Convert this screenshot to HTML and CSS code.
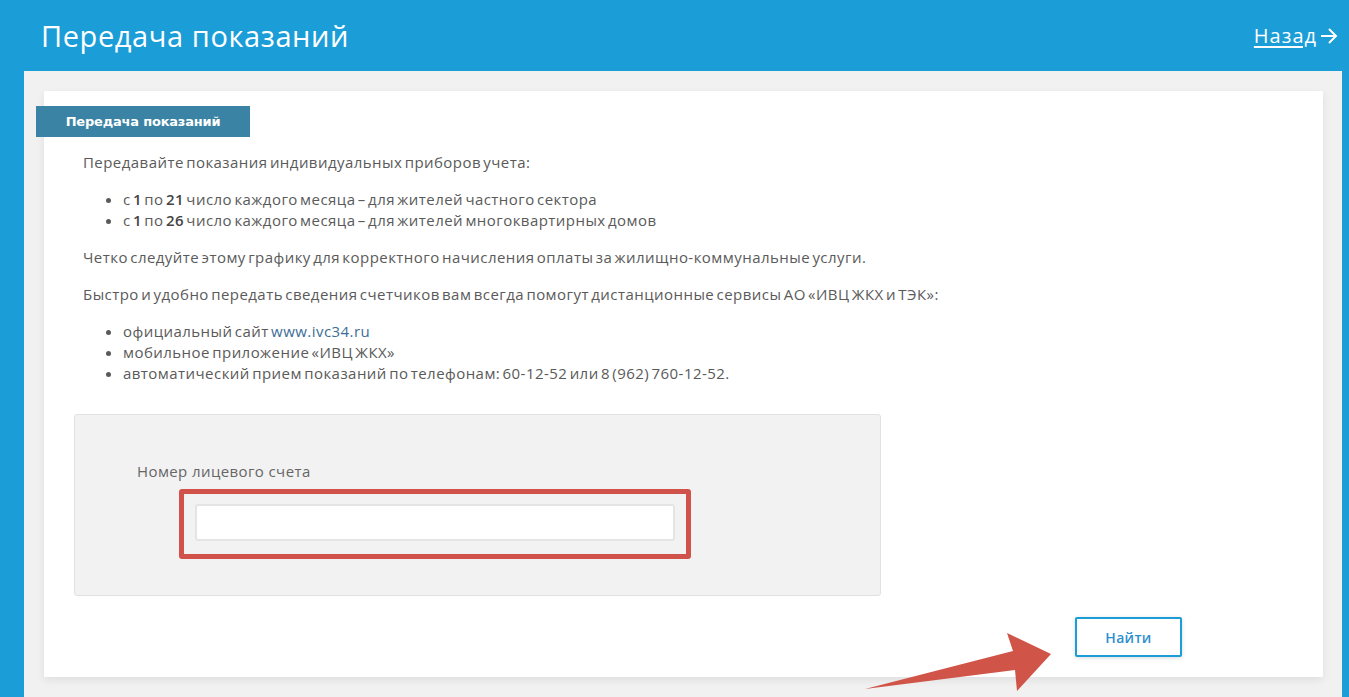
FILE: index.html
```html
<!DOCTYPE html>
<html lang="ru">
<head>
    <meta charset="UTF-8">
    <title>Передача показаний</title>
    <link rel="stylesheet" href="styles.css">
</head>
<body>
    <!-- Top bar -->
    <header class="top-bar">
        <h1 class="page-title">Передача показаний</h1>
        <a class="back-link" href="#">
            <span>Назад</span>
            <svg width="18" height="18" viewBox="0 0 18 18" fill="none" stroke="#fff" stroke-width="2">
                <path d="M1 9h15M9 2l7 7-7 7"/>
            </svg>
        </a>
    </header>

    <div class="panel">
        <div class="card">
            <div class="tab-label">Передача показаний</div>

            <div class="info">
                <p>Передавайте показания индивидуальных приборов учета:</p>
                <ul>
                    <li>с <b>1</b> по <b>21</b> число каждого месяца – для жителей частного сектора</li>
                    <li>с <b>1</b> по <b>26</b> число каждого месяца – для жителей многоквартирных домов</li>
                </ul>
                <p>Четко следуйте этому графику для корректного начисления оплаты за жилищно-коммунальные услуги.</p>
                <p>Быстро и удобно передать сведения счетчиков вам всегда помогут дистанционные сервисы АО «ИВЦ ЖКХ и ТЭК»:</p>
                <ul>
                    <li>официальный сайт <a href="#">www.ivc34.ru</a></li>
                    <li>мобильное приложение «ИВЦ ЖКХ»</li>
                    <li>автоматический прием показаний по телефонам: 60-12-52 или 8 (962) 760-12-52.</li>
                </ul>
            </div>

            <!-- Search form -->
            <div class="form-box">
                <label class="form-label" for="account">Номер лицевого счета</label>
                <div class="highlight">
                    <input type="text" id="account" class="form-input">
                </div>
            </div>

            <div class="actions">
                <button class="find-btn">Найти</button>
            </div>

            <!-- Annotation arrow -->
            <svg class="pointer-arrow" width="200" height="70" viewBox="0 0 200 70">
                <polygon points="0,68 148,30 142,12 186,33 152,70 150,49" fill="#d05447"/>
            </svg>
        </div>
    </div>
</body>
</html>
```

FILE: styles.css
```css
/* General */
body {
    margin: 0;
    font-family: "Open Sans", sans-serif;
    background: #1b9dd8;
    color: #555;
    height: 697px;
    overflow: hidden;
    display: flex;
    flex-direction: column;
}

/* Top bar */
.top-bar {
    height: 71px;
    flex-shrink: 0;
    display: flex;
    align-items: center;
    justify-content: space-between;
    padding: 0 11px 0 41px;
}

.page-title {
    margin: 0;
    font-family: "Open Sans", sans-serif;
    font-weight: 400;
    font-size: 29px;
    color: #fff;
    letter-spacing: 0.6px;
}

.back-link {
    display: flex;
    align-items: center;
    gap: 3px;
    color: #fff;
    font-size: 20px;
    letter-spacing: 1px;
    text-decoration: none;
}

.back-link span {
    text-decoration: underline;
    text-underline-offset: 3px;
}

/* Gray panel */
.panel {
    flex: 1;
    background: #f1f1f1;
    margin: 0 7px 0 24px;
    padding: 20px 19px 20px 20px;
}

/* White card */
.card {
    position: relative;
    background: #fff;
    box-shadow: 0 3px 8px rgba(0, 0, 0, 0.08);
    padding: 15px 30px 20px 30px;
    height: 551px;
}

.tab-label {
    margin-left: -38px;
    width: 214px;
    height: 31px;
    line-height: 31px;
    background: #3a83a4;
    color: #fff;
    font-family: "DejaVu Sans", sans-serif;
    font-weight: bold;
    font-size: 13px;
    text-align: center;
    letter-spacing: -0.2px;
}

/* Info text */
.info {
    padding-left: 9px;
    font-size: 15px;
    letter-spacing: 0.45px;
    word-spacing: -2px;
    line-height: 21px;
    color: #5a5a5a;
}

.info p {
    margin: 15px 0 16px;
}

.info ul {
    margin: 16px 0;
    padding-left: 40px;
}

.info b {
    font-weight: 600;
    color: #444;
}

.info a {
    color: #3d6d96;
    text-decoration: none;
}

/* Form */
.form-box {
    margin-top: 30px;
    width: 807px;
    height: 182px;
    background: #f2f2f2;
    border: 1px solid #e1e1e1;
    border-radius: 3px;
    box-sizing: border-box;
    padding: 46px 0 0 62px;
}

.form-label {
    display: block;
    font-size: 15px;
    letter-spacing: 0.4px;
    color: #666;
}

.highlight {
    margin: 8px 0 0 42px;
    width: 512px;
    height: 70px;
    box-sizing: border-box;
    border: 5px solid #d0524a;
    border-radius: 3px;
    padding: 10px 11px;
}

.form-input {
    display: block;
    width: 100%;
    height: 37px;
    box-sizing: border-box;
    border: 2px solid #e4e4e4;
    border-radius: 3px;
    background: #fff;
}

/* Actions */
.actions {
    display: flex;
    justify-content: flex-end;
    margin-top: 21px;
    padding-right: 111px;
}

.find-btn {
    width: 107px;
    height: 40px;
    background: #fff;
    border: 2px solid #1b9dd8;
    border-radius: 2px;
    color: #2d8fcf;
    font-family: "Open Sans", sans-serif;
    font-weight: 600;
    font-size: 14px;
    letter-spacing: 0.3px;
    box-shadow: 0 1px 4px rgba(0, 0, 0, 0.15);
    cursor: pointer;
}

.pointer-arrow {
    position: absolute;
    left: 821px;
    top: 530px;
}
```
